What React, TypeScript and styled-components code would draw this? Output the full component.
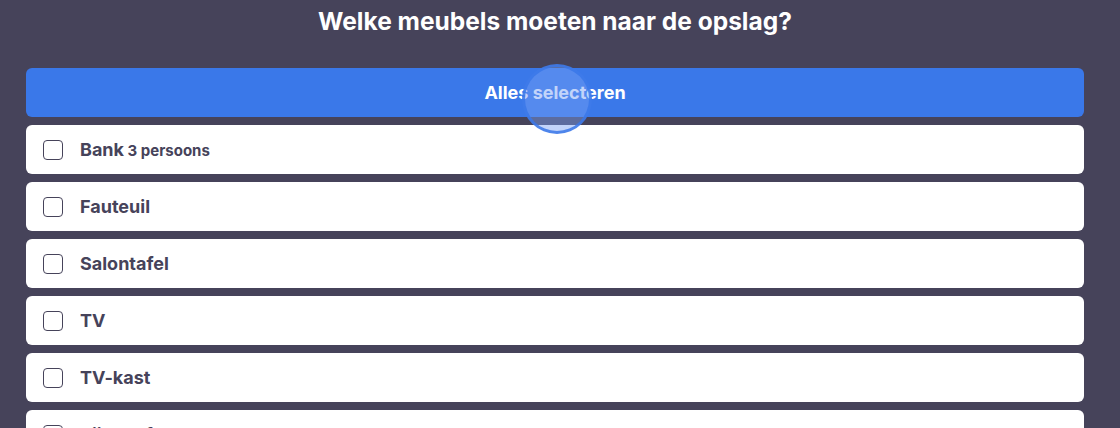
import React, { useState } from 'react';
import styled, { createGlobalStyle } from 'styled-components';

const GlobalStyle = createGlobalStyle`
  body {
    margin: 0;
    background: #46435a;
    font-family: Inter, 'Noto Sans', sans-serif;
    overflow: hidden;
  }
`;

const items = [
  { name: 'Bank', extra: '3 persoons' },
  { name: 'Fauteuil' },
  { name: 'Salontafel' },
  { name: 'TV' },
  { name: 'TV-kast' },
  { name: 'Bijzettafel' },
];

const App: React.FC = () => {
  const [checked, setChecked] = useState<boolean[]>(items.map(() => false));

  const toggle = (i: number) => {
    setChecked((prev) => prev.map((c, idx) => (idx === i ? !c : c)));
  };

  return (
    <>
      <GlobalStyle />
      <Page>
        <Title>Welke meubels moeten naar de opslag?</Title>
        <ButtonWrapper>
          <SelectAll onClick={() => setChecked(items.map(() => true))}>Alles selecteren</SelectAll>
          <TouchRing />
        </ButtonWrapper>
        <List>
          {items.map((item, i) => (
            <Item key={item.name} onClick={() => toggle(i)}>
              <Checkbox checked={checked[i]} />
              <Label>
                {item.name}
                {item.extra && <Extra> {item.extra}</Extra>}
              </Label>
            </Item>
          ))}
        </List>
      </Page>
    </>
  );
};

const Page = styled.div`
  display: flex;
  flex-direction: column;
  padding: 6px 36px 0 26px;
`;

const Title = styled.h1`
  margin: 0 0 32px;
  height: 30px;
  line-height: 30px;
  text-align: center;
  color: #ffffff;
  font-size: 24.5px;
  font-weight: 700;
`;

const ButtonWrapper = styled.div`
  position: relative;
  margin-bottom: 8px;
`;

const SelectAll = styled.button`
  display: block;
  width: 100%;
  height: 49px;
  border: none;
  border-radius: 6px;
  background: #3a78e9;
  color: #ffffff;
  font-family: Inter, 'Noto Sans', sans-serif;
  font-size: 18px;
  font-weight: 700;
  cursor: pointer;
`;

const TouchRing = styled.span`
  position: absolute;
  left: 496px;
  top: -4px;
  width: 64px;
  height: 64px;
  border-radius: 50%;
  border: 3px solid rgba(58, 120, 233, 0.85);
  background: rgba(120, 160, 245, 0.45);
  pointer-events: none;
`;

const List = styled.div`
  display: flex;
  flex-direction: column;
  gap: 8px;
`;

const Item = styled.div`
  display: flex;
  align-items: center;
  gap: 17px;
  height: 49px;
  padding: 0 17px;
  background: #ffffff;
  border-radius: 6px;
  cursor: pointer;
`;

const Checkbox = styled.span<{ checked: boolean }>`
  box-sizing: border-box;
  width: 20px;
  height: 20px;
  flex-shrink: 0;
  border: 1.5px solid #46435a;
  border-radius: 4px;
  background: ${(p) => (p.checked ? '#3a78e9' : '#ffffff')};
`;

const Label = styled.span`
  color: #46435a;
  font-size: 18px;
  font-weight: 700;
`;

const Extra = styled.span`
  font-size: 15px;
`;

export default App;
